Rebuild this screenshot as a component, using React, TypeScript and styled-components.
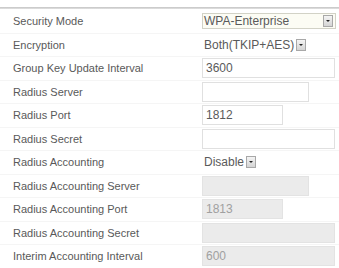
import styled, { createGlobalStyle } from 'styled-components';

type Size = 'long' | 'medium' | 'short';

type Row =
	| { label: string; kind: 'select'; value: string; boxed?: boolean }
	| { label: string; kind: 'input'; value: string; size: Size; disabled?: boolean };

const rows: Row[] = [
	{ label: 'Security Mode', kind: 'select', value: 'WPA-Enterprise', boxed: true },
	{ label: 'Encryption', kind: 'select', value: 'Both(TKIP+AES)' },
	{ label: 'Group Key Update Interval', kind: 'input', value: '3600', size: 'long' },
	{ label: 'Radius Server', kind: 'input', value: '', size: 'medium' },
	{ label: 'Radius Port', kind: 'input', value: '1812', size: 'short' },
	{ label: 'Radius Secret', kind: 'input', value: '', size: 'long' },
	{ label: 'Radius Accounting', kind: 'select', value: 'Disable' },
	{ label: 'Radius Accounting Server', kind: 'input', value: '', size: 'medium', disabled: true },
	{ label: 'Radius Accounting Port', kind: 'input', value: '1813', size: 'short', disabled: true },
	{ label: 'Radius Accounting Secret', kind: 'input', value: '', size: 'long', disabled: true },
	{ label: 'Interim Accounting Interval', kind: 'input', value: '600', size: 'long', disabled: true },
];

const widths: Record<Size, number> = { long: 133, medium: 107, short: 81 };

const App = () => {
	return (
		<>
			<GlobalStyle />
			<Page>
				<Rule />
				<Table>
					{rows.map((row) => (
						<FormRow key={row.label}>
							<Label>{row.label}</Label>
							{row.kind === 'select' ? (
								<Select $boxed={!!row.boxed}>
									<span className="value">{row.value}</span>
									<ArrowButton />
								</Select>
							) : (
								<Field
									type="text"
									defaultValue={row.value}
									disabled={row.disabled}
									$width={widths[row.size]}
								/>
							)}
						</FormRow>
					))}
				</Table>
			</Page>
		</>
	);
};

export default App;

const GlobalStyle = createGlobalStyle`
	html, body {
		margin: 0;
		background: #ffffff;
		font-family: "Liberation Sans", Arial, sans-serif;
	}
`;

const Page = styled.div`
	width: 339px;
	height: 268px;
	overflow: hidden;
	padding-top: 7px;
	box-sizing: border-box;
`;

const Rule = styled.div`
	height: 2px;
	background: linear-gradient(#c4c4c4, #e2e2e2);
`;

const Table = styled.div`
	display: flex;
	flex-direction: column;
	padding-top: 1px;
`;

const FormRow = styled.div`
	display: grid;
	grid-template-columns: 202px 1fr;
	align-items: center;
	height: 23.5px;
	box-sizing: border-box;
	border-bottom: 1px solid #f5f5f5;
`;

const Label = styled.span`
	padding-left: 13px;
	font-size: 11px;
	color: #595959;
	white-space: nowrap;
`;

const Select = styled.div<{ $boxed: boolean }>`
	display: flex;
	align-items: center;
	gap: 2px;
	height: 16px;
	box-sizing: border-box;
	width: ${({ $boxed }) => ($boxed ? '134px' : 'max-content')};
	justify-content: space-between;
	padding: 0 2px 0 1px;
	border: 1px solid ${({ $boxed }) => ($boxed ? '#d2d2c6' : 'transparent')};
	background: ${({ $boxed }) => ($boxed ? '#fcfcf4' : 'transparent')};
	font-size: 12px;
	color: #5a5a5a;

	.value {
		white-space: nowrap;
	}
`;

const ArrowButton = styled.span`
	position: relative;
	flex: none;
	width: 10px;
	height: 12px;
	box-sizing: border-box;
	border: 1px solid #a8a8a8;
	background: linear-gradient(#f4f4f4, #d4d4d4);

	&::after {
		content: '';
		position: absolute;
		left: 2px;
		top: 4px;
		border-left: 2px solid transparent;
		border-right: 2px solid transparent;
		border-top: 2px solid #222222;
	}
`;

const Field = styled.input<{ $width: number }>`
	width: ${({ $width }) => $width}px;
	height: 20px;
	margin: 0;
	padding: 0 3px;
	box-sizing: border-box;
	border: 1px solid #e0e0e0;
	border-radius: 0;
	background: #ffffff;
	font-family: "Liberation Sans", Arial, sans-serif;
	font-size: 12px;
	color: #5a5a5a;
	outline: none;

	&:disabled {
		background: #ebebeb;
		border-color: #e3e3e3;
		color: #a0a0a0;
	}
`;
